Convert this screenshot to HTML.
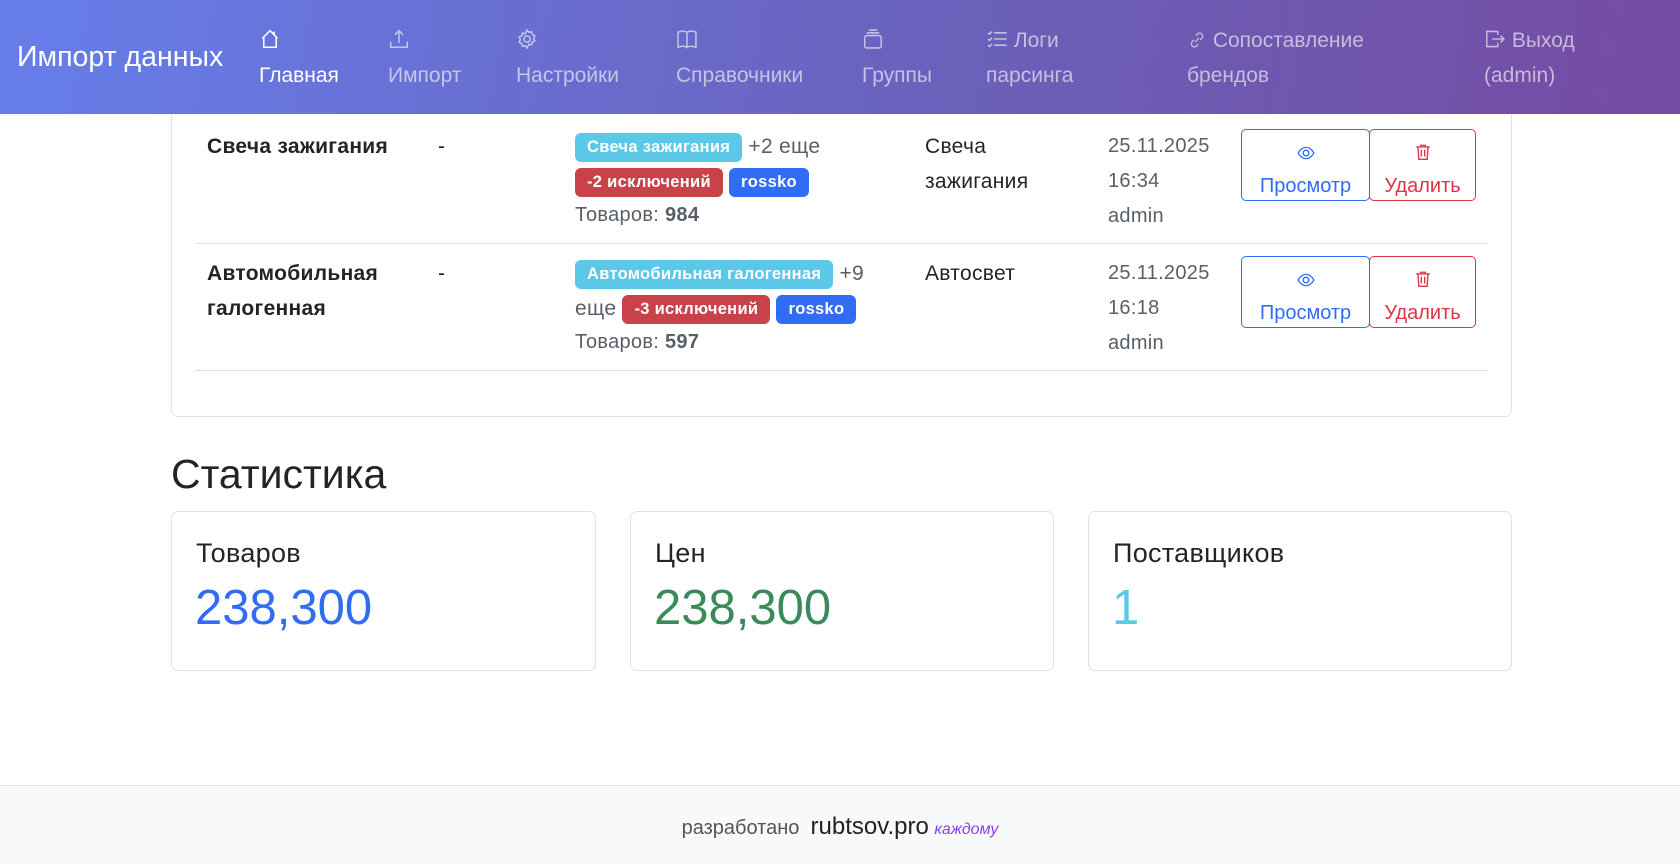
<!DOCTYPE html>
<html><head><meta charset="utf-8"><style>
*{box-sizing:border-box;margin:0;padding:0}
body{width:1680px;height:864px;overflow:hidden;background:#fff;font-family:"Liberation Sans","Noto Sans CJK SC",sans-serif;color:#212529;position:relative}
.nav{position:absolute;left:0;top:0;width:1680px;height:114px;background:linear-gradient(100deg,#667eea 0%,#6b5fb8 60%,#764ba2 100%);color:rgba(255,255,255,.6);font-size:21px}
.nav .brand{position:absolute;left:17px;top:41px;font-size:28.5px;color:#fff}
.ni{position:absolute;line-height:35px}
.ni svg{vertical-align:-3px}
.a{position:absolute}
.card{position:absolute;border:1px solid #dee2e6;border-radius:7px;background:#fff}
.badge{display:inline-block;font-size:16.5px;font-weight:bold;color:#fff;border-radius:6px;padding:0 12px;line-height:29px;vertical-align:middle;letter-spacing:.3px}
.btn{position:absolute;height:72px;border:1px solid;border-radius:5px;text-align:center;font-size:20px;padding-top:11px;line-height:30px}
.row{font-size:21px;line-height:35px;letter-spacing:.3px}
.stl{font-size:27px;position:absolute;left:24px;top:26px;letter-spacing:.3px}
.stv{font-size:49px;position:absolute;left:23px;top:68px}
</style></head><body>
<div class="nav">
<div class="brand">Импорт данных</div>
<div class="ni" style="left:259px;top:23px;color:#fff"><svg width="22" height="22" viewBox="0 0 16 16" fill="none" stroke="#fff" stroke-width="1.1"><path d="M2.5 7.5L8 2l5.5 5.5M3.5 6.5V14h9V6.5M11 2.5v2"/></svg></div>
<div class="ni" style="left:259px;top:58px;color:#fff">Главная</div>
<div class="ni" style="left:388px;top:23px"><svg width="22" height="22" viewBox="0 0 16 16" fill="none" stroke="currentColor" stroke-width="1.1"><path d="M8 11V2M5 5l3-3 3 3M2 10v4h12v-4"/></svg></div>
<div class="ni" style="left:388px;top:58px">Импорт</div>
<div class="ni" style="left:516px;top:23px"><svg width="22" height="22" viewBox="0 0 16 16" fill="none" stroke="currentColor" stroke-width="1.1"><circle cx="8" cy="8" r="2.3"/><path d="M8 1.5l1.3 1.6 2-.4.5 2 1.9.9-.8 1.9.8 1.9-1.9.9-.5 2-2-.4L8 14.5l-1.3-1.6-2 .4-.5-2-1.9-.9.8-1.9-.8-1.9 1.9-.9.5-2 2 .4z"/></svg></div>
<div class="ni" style="left:516px;top:58px">Настройки</div>
<div class="ni" style="left:676px;top:23px"><svg width="22" height="22" viewBox="0 0 16 16" fill="none" stroke="currentColor" stroke-width="1.1"><path d="M1.5 3c2.5-1 4.5-1 6.5 0v11c-2-1-4-1-6.5 0zM8 3c2-1 4-1 6.5 0v11c-2.5-1-4.5-1-6.5 0z"/></svg></div>
<div class="ni" style="left:676px;top:58px">Справочники</div>
<div class="ni" style="left:862px;top:23px"><svg width="22" height="22" viewBox="0 0 16 16" fill="none" stroke="currentColor" stroke-width="1.1"><path d="M5 1.5h6M3.5 3.5h9"/><rect x="2" y="5.5" width="12" height="9" rx="1.5"/></svg></div>
<div class="ni" style="left:862px;top:58px">Группы</div>
<div class="ni" style="left:986px;top:23px"><svg width="22" height="22" viewBox="0 0 16 16" fill="none" stroke="currentColor" stroke-width="1.1"><path d="M6 3.5h9M6 8h9M6 12.5h9M1.5 3.5l1 1 2-2M1.5 8l1 1 2-2M1.5 12.5l1 1 2-2"/></svg> Логи</div>
<div class="ni" style="left:986px;top:58px">парсинга</div>
<div class="ni" style="left:1187px;top:23px"><svg width="20" height="20" viewBox="0 0 16 16" fill="none" stroke="currentColor" stroke-width="1.1"><path d="M6.5 9.5l3-3M7 4.5l1.5-1.5a2.5 2.5 0 013.5 3.5L10.5 8M9 11.5L7.5 13A2.5 2.5 0 014 9.5L5.5 8"/></svg> Сопоставление</div>
<div class="ni" style="left:1187px;top:58px">брендов</div>
<div class="ni" style="left:1484px;top:23px"><svg width="22" height="22" viewBox="0 0 16 16" fill="none" stroke="currentColor" stroke-width="1.1"><path d="M10 5V2.5H2v11h8V11M6 8h8.5M12 5.5L14.5 8 12 10.5"/></svg> Выход</div>
<div class="ni" style="left:1484px;top:58px">(admin)</div>
</div>

<div class="card" style="left:171px;top:60px;width:1341px;height:357px;border-top:none;z-index:-1"></div>
<div class="a" style="left:195px;top:243px;width:1293px;border-top:1px solid #dee2e6"></div>
<div class="a" style="left:195px;top:370px;width:1293px;border-top:1px solid #dee2e6"></div>

<div class="row">
<div class="a" style="left:207px;top:129px;font-weight:bold">Свеча зажигания</div>
<div class="a" style="left:438px;top:129px">-</div>
<div class="a" style="left:575px;top:129px;width:330px;color:#595f66"><span class="badge" style="background:#5bc8e8">Свеча зажигания</span> +2 еще</div>
<div class="a" style="left:575px;top:164px"><span class="badge" style="background:#c94249">-2 исключений</span> <span class="badge" style="background:#316cf4">rossko</span></div>
<div class="a" style="left:575px;top:198px;color:#595f66;font-size:20px">Товаров: <b>984</b></div>
<div class="a" style="left:925px;top:129px">Свеча<br>зажигания</div>
<div class="a" style="left:1108px;top:129px;color:#595f66;font-size:20px">25.11.2025<br>16:34<br>admin</div>

<div class="a" style="left:207px;top:256px;font-weight:bold">Автомобильная<br>галогенная</div>
<div class="a" style="left:438px;top:256px">-</div>
<div class="a" style="left:575px;top:256px;width:340px;color:#595f66"><span class="badge" style="background:#5bc8e8">Автомобильная галогенная</span> +9</div>
<div class="a" style="left:575px;top:291px;width:340px;color:#595f66">еще <span class="badge" style="background:#c94249">-3 исключений</span> <span class="badge" style="background:#316cf4">rossko</span></div>
<div class="a" style="left:575px;top:325px;color:#595f66;font-size:20px">Товаров: <b>597</b></div>
<div class="a" style="left:925px;top:256px">Автосвет</div>
<div class="a" style="left:1108px;top:256px;color:#595f66;font-size:20px">25.11.2025<br>16:18<br>admin</div>
</div>

<div class="btn" style="left:1241px;top:129px;width:129px;border-color:#316cf4;color:#316cf4"><svg width="18" height="18" viewBox="0 0 16 16" fill="none" stroke="#316cf4" stroke-width="1.2"><path d="M1 8s2.5-5 7-5 7 5 7 5-2.5 5-7 5-7-5-7-5z"/><circle cx="8" cy="8" r="2.5"/></svg><br>Просмотр</div>
<div class="btn" style="left:1369px;top:129px;width:107px;border-color:#dc3545;color:#dc3545"><svg width="18" height="20" viewBox="0 0 16 16" fill="none" stroke="#dc3545" stroke-width="1.2"><path d="M2 3.5h12M6 3.5V2h4v1.5M3.5 3.5l.8 11h7.4l.8-11M6.5 6v6M9.5 6v6"/></svg><br>Удалить</div>
<div class="btn" style="left:1241px;top:256px;width:129px;border-color:#316cf4;color:#316cf4"><svg width="18" height="18" viewBox="0 0 16 16" fill="none" stroke="#316cf4" stroke-width="1.2"><path d="M1 8s2.5-5 7-5 7 5 7 5-2.5 5-7 5-7-5-7-5z"/><circle cx="8" cy="8" r="2.5"/></svg><br>Просмотр</div>
<div class="btn" style="left:1369px;top:256px;width:107px;border-color:#dc3545;color:#dc3545"><svg width="18" height="20" viewBox="0 0 16 16" fill="none" stroke="#dc3545" stroke-width="1.2"><path d="M2 3.5h12M6 3.5V2h4v1.5M3.5 3.5l.8 11h7.4l.8-11M6.5 6v6M9.5 6v6"/></svg><br>Удалить</div>

<div class="a" style="left:171px;top:451px;font-size:41px">Статистика</div>
<div class="card" style="left:171px;top:511px;width:425px;height:160px"><div class="stl">Товаров</div><div class="stv" style="color:#316cf4">238,300</div></div>
<div class="card" style="left:630px;top:511px;width:424px;height:160px"><div class="stl">Цен</div><div class="stv" style="color:#3a8a5a">238,300</div></div>
<div class="card" style="left:1088px;top:511px;width:424px;height:160px"><div class="stl">Поставщиков</div><div class="stv" style="color:#5bc8e8">1</div></div>

<div class="a" style="left:0;top:785px;width:1680px;height:79px;background:#f8f9fa;border-top:1px solid #dee2e6;text-align:center;padding-top:27px;font-size:20px;color:#555">разработано&nbsp; <span style="color:#222;font-size:24px">rubtsov.pro</span> <span style="color:#8b3cf0;font-style:italic;font-size:16px">каждому</span></div>
</body></html>
